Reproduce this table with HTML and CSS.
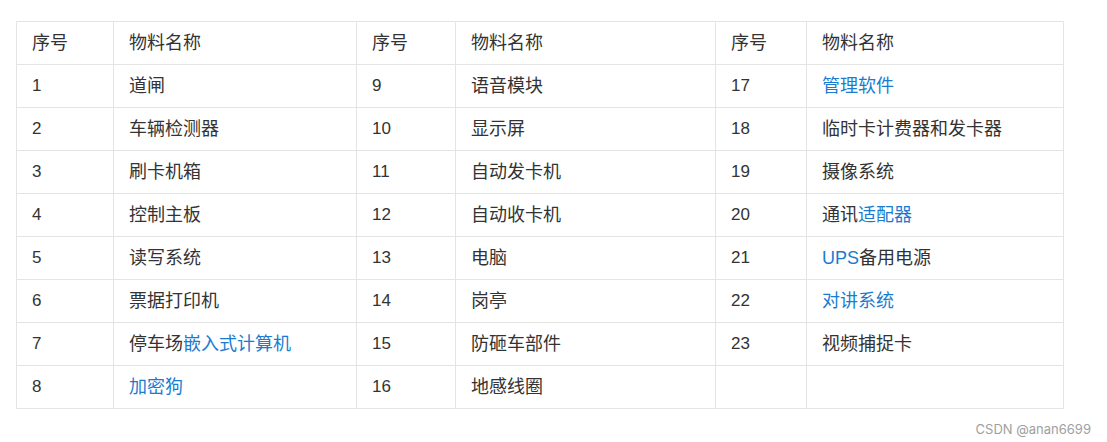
FILE: index.html
```html
<!DOCTYPE html>
<html lang="zh">
<head>
<meta charset="utf-8">
<link rel="stylesheet" href="styles.css">
</head>
<body>
<div class="page">
<table class="parts">
<colgroup>
<col class="c-no1"><col class="c-name1"><col class="c-no2"><col class="c-name2"><col class="c-no3"><col class="c-name3">
</colgroup>
<thead>
<tr><th>序号</th><th>物料名称</th><th>序号</th><th>物料名称</th><th>序号</th><th>物料名称</th></tr>
</thead>
<tbody>
<tr><td class="num">1</td><td>道闸</td><td class="num">9</td><td>语音模块</td><td class="num">17</td><td><a class="link">管理软件</a></td></tr>
<tr><td class="num">2</td><td>车辆检测器</td><td class="num">10</td><td>显示屏</td><td class="num">18</td><td>临时卡计费器和发卡器</td></tr>
<tr><td class="num">3</td><td>刷卡机箱</td><td class="num">11</td><td>自动发卡机</td><td class="num">19</td><td>摄像系统</td></tr>
<tr><td class="num">4</td><td>控制主板</td><td class="num">12</td><td>自动收卡机</td><td class="num">20</td><td>通讯<a class="link">适配器</a></td></tr>
<tr><td class="num">5</td><td>读写系统</td><td class="num">13</td><td>电脑</td><td class="num">21</td><td><a class="link">UPS</a>备用电源</td></tr>
<tr><td class="num">6</td><td>票据打印机</td><td class="num">14</td><td>岗亭</td><td class="num">22</td><td><a class="link">对讲系统</a></td></tr>
<tr><td class="num">7</td><td>停车场<a class="link">嵌入式计算机</a></td><td class="num">15</td><td>防砸车部件</td><td class="num">23</td><td>视频捕捉卡</td></tr>
<tr><td class="num">8</td><td><a class="link">加密狗</a></td><td class="num">16</td><td>地感线圈</td><td></td><td></td></tr>
</tbody>
</table>
<div class="watermark">CSDN @anan6699</div>
</div>
</body>
</html>
```
FILE: styles.css
```css
html, body {
  margin: 0;
  padding: 0;
  background: #ffffff;
}
.page {
  padding: 21px 0 0 16px;
  width: 1091px;
  font-family: "Liberation Sans", "Noto Sans CJK SC", sans-serif;
  color: #333333;
}
.parts {
  border-collapse: collapse;
  table-layout: fixed;
  width: 1048px;
  font-size: 18px;
}
.c-no1 { width: 97px; }
.c-name1 { width: 243px; }
.c-no2 { width: 99px; }
.c-name2 { width: 260px; }
.c-no3 { width: 91px; }
.c-name3 { width: 257px; }
.parts th,
.parts td {
  border: 1px solid #e4e4e4;
  height: 43px;
  padding: 0 15px;
  box-sizing: border-box;
  text-align: left;
  font-weight: normal;
  vertical-align: middle;
  white-space: nowrap;
  line-height: 24px;
}
.parts td.num {
  font-size: 17px;
}
.link {
  color: #1a7cd0;
  text-decoration: none;
}
.watermark {
  text-align: right;
  padding: 12px 16px 0 0;
  font-size: 13px;
  color: #a0a0a0;
  font-family: "Inter", "Liberation Sans", sans-serif;
}
```
